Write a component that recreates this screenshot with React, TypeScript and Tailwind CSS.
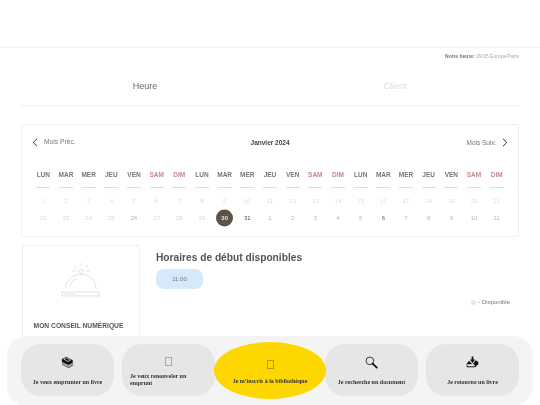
const days = ["LUN","MAR","MER","JEU","VEN","SAM","DIM"];
const heads = [...days, ...days, ...days];
const row1 = Array.from({ length: 21 }, (_, i) => i + 1);
const row2 = [22,23,24,25,26,27,28,29,30,31,1,2,3,4,5,6,7,8,9,10,11];

function dateClass(n: number, i: number) {
  if (n === 26) return "text-[#b4b4b4]";
  if (i < 8) return "text-[#d8d8d8]";
  if (i === 9) return "text-[#444444]";
  if (i === 15) return "text-[#666666]";
  return "text-[#b8b8b8]";
}

function Books() {
  return (
    <svg width="13" height="13" viewBox="0 0 15 15">
      <path d="M1 3.5 L6 1 L13.5 5 L13.5 8 L8.5 10.5 L1 7 Z" fill="#111" />
      <path d="M1 7 L8.5 11 L14 8 L14 11 L9 14 L1.5 10.5 Z" fill="#666" />
      <path d="M1.5 8.5 L8.5 12 L13.5 9.5 M3 3.5 L6 2 L11 4.8 L8 6.3 Z" stroke="#eee" strokeWidth="0.8" fill="none" />
    </svg>
  );
}
function Loupe() {
  return (
    <svg width="13" height="13" viewBox="0 0 15 15">
      <circle cx="5.6" cy="5.6" r="4.4" fill="none" stroke="#333" strokeWidth="1.1" />
      <path d="M8.8 8.8 L13.6 13.4" stroke="#111" strokeWidth="2.1" strokeLinecap="round" />
    </svg>
  );
}
function Tray() {
  return (
    <svg width="13" height="13" viewBox="0 0 15 15">
      <path d="M6.5 0.5 H8.5 V4 H10.5 L7.5 8 L4.5 4 H6.5 Z" fill="#111" />
      <path d="M3.5 5.5 L0.8 9 V13 H10.5 L14.2 9.5 V7 L11 5 L7.5 9.8 Z" fill="#111" />
      <path d="M1.6 9.6 H9.4 L10.4 11.8 H1.6 Z" fill="#eee" />
    </svg>
  );
}
function Bell() {
  return (
    <svg width="40" height="36" viewBox="0 0 40 36" fill="none" stroke="#cccccc" strokeWidth="0.6">
      <circle cx="20" cy="9.5" r="2" />
      <path d="M20 11.5 V12.5 M5 27 C5 18 11 12.5 20 12.5 C29 12.5 35 18 35 27 M8.5 25 C9.5 21 12 18 16 16.5" />
      <path d="M20 1 V4 M13 3 L15.5 5.5 M27 3 L24.5 5.5 M11 9 H15 M25 9 H29" />
      <rect x="1" y="30" width="37" height="4" />
      <path d="M3 32 H14" />
    </svg>
  );
}

function DockItem({ label, icon, left }: { label: string; icon: React.ReactNode; left?: boolean }) {
  return (
    <div className="flex h-[52px] w-[93px] shrink-0 flex-col items-center rounded-[20px] bg-[#e6e6e6] px-2">
      <div className="flex h-[25px] items-end justify-center">{icon}</div>
      <div className={`flex w-full items-center text-[6px] leading-[7px] font-bold text-[#333333] ${left ? "h-[21px] justify-start" : "h-[28px] justify-center whitespace-nowrap"}`}>
        {label}
      </div>
    </div>
  );
}

function Tofu({ color }: { color: string }) {
  return <div className={`h-[9px] w-[7px] border-[0.7px] ${color}`} />;
}

export default function App() {
  return (
    <div className="relative h-[405px] w-[540px] overflow-hidden bg-white font-['Liberation_Sans',Arial,sans-serif] blur-[0.35px]">
      <div className="h-[48px] border-b border-[#f0f0f0]" />
      <div className="mt-[5px] pr-[21px] text-right text-[5px] leading-[6px] text-[#a8a8a8]">
        <span className="font-bold text-[#777777]">Notre heure:</span> 09:05 Europe/Paris
      </div>
      <div className="mx-[20px] mt-[14px] flex h-[33px] items-center border-b border-[#f0f0f0] pb-[4px]">
        <div className="w-1/2 text-center text-[9px] text-[#666666]">Heure</div>
        <div className="w-1/2 text-center text-[9px] text-[#dddddd]">Client</div>
      </div>

      <div className="mx-[21px] mt-[18px] h-[113px] rounded-[2px] border border-[#f0f0f0] px-[10px]">
        <div className="flex h-[35px] items-center justify-between">
          <div className="flex items-center gap-[6px] text-[6.7px] text-[#777777]">
            <svg width="6" height="9" viewBox="0 0 6 9" fill="none" stroke="#333" strokeWidth="1"><path d="M5 0.8 L1.2 4.5 L5 8.2" /></svg>
            Mois Préc.
          </div>
          <div className="-ml-[2px] text-[6.5px] font-bold text-[#444444]">Janvier 2024</div>
          <div className="flex items-center gap-[6px] text-[6.5px] text-[#777777]">
            Mois Suiv.
            <svg width="6" height="9" viewBox="0 0 6 9" fill="none" stroke="#333" strokeWidth="1"><path d="M1 0.8 L4.8 4.5 L1 8.2" /></svg>
          </div>
        </div>
        <div className="grid grid-cols-[repeat(21,1fr)]">
          {heads.map((d, i) => (
            <div key={i} className="flex flex-col items-center pt-[11px]">
              <div className={`text-[6.5px] leading-[8px] font-bold ${i % 7 >= 5 ? "text-[#c48a8a]" : "text-[#777777]"}`}>{d}</div>
              <div className="mt-[8px] h-px w-[14px] bg-[#dddddd]" />
            </div>
          ))}
          {row1.map((n) => (
            <div key={n} className="flex h-[18px] items-end justify-center pb-[1px] text-[6px] leading-[8px] text-[#dddddd]">{n}</div>
          ))}
          {row2.map((n, i) => (
            <div key={i} className="flex h-[16px] items-end justify-center">
              {i === 8 ? (
                <div className="flex h-[17px] w-[17px] translate-y-[4.5px] items-center justify-center rounded-full bg-[#5c5346] text-[6px] font-bold text-[#e8e8e8]">{n}</div>
              ) : (
                <div className={`text-[6px] leading-[8px] ${dateClass(n, i)}`}>{n}</div>
              )}
            </div>
          ))}
        </div>
      </div>

      <div className="mx-[22px] mt-[8px] flex">
        <div className="flex h-[110px] w-[118px] shrink-0 flex-col items-center border border-[#f0f0f0]">
          <div className="mt-[16px]"><Bell /></div>
          <div className="mt-[24px] pr-[5px] text-[6.7px] leading-[8px] font-bold text-[#555555]">MON CONSEIL NUMÉRIQUE</div>
        </div>
        <div className="ml-[16px] flex-1">
          <div className="mt-[6px] text-[10.2px] leading-[14px] font-bold text-[#555555]">Horaires de début disponibles</div>
          <div className="mt-[4px] flex h-[20px] w-[47px] items-center justify-center rounded-[8px] bg-[#d6e9fb] text-[6px] text-[#777777]">11:00</div>
          <div className="mt-[9px] flex items-center justify-end gap-[2px] pr-[8px] text-[6px] text-[#777777]">
            <span className="h-[5px] w-[5px] rounded-full bg-[#d6e9fb]" />
            - Disponible
          </div>
        </div>
      </div>

      <div className="absolute top-[336px] left-[7px] flex h-[70px] w-[526px] items-start rounded-[20px] bg-[#f4f4f4] pt-[8px] pl-[14px] font-['Liberation_Serif',serif]">
        <DockItem label="Je veux emprunter un livre" icon={<Books />} />
        <div className="ml-[8px]">
          <DockItem label="Je veux renouveler un emprunt" icon={<div className="mb-[3px]"><Tofu color="border-[#aaaaaa]" /></div>} left />
        </div>
        <div className="z-10 -mx-px -mt-[2px] flex h-[57px] w-[112px] shrink-0 flex-col items-center rounded-[50%] bg-[#ffd700]">
          <div className="flex h-[27px] items-end"><Tofu color="border-[#b09a20]" /></div>
          <div className="mt-[9px] text-[6px] leading-[7px] font-bold whitespace-nowrap text-[#333333]">Je m'inscris à la bibliothèque</div>
        </div>
        <DockItem label="Je recherche un document" icon={<Loupe />} />
        <div className="ml-[8px]">
          <DockItem label="Je retourne un livre" icon={<Tray />} />
        </div>
      </div>
    </div>
  );
}
